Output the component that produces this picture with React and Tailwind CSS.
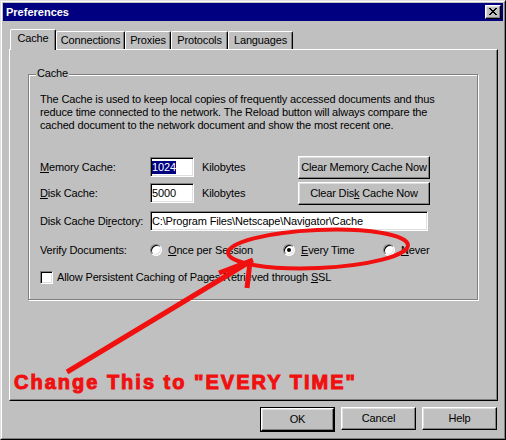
import React from "react";

const raised =
  "border border-t-white border-l-white border-r-black border-b-black shadow-[inset_-1px_-1px_#808080,inset_1px_1px_#dfdfdf] bg-[#c0c0c0]";
const sunken =
  "border border-t-[#808080] border-l-[#808080] border-r-white border-b-white shadow-[inset_1px_1px_#000,inset_-1px_-1px_#dfdfdf] bg-white";

function Button({ children, className = "" }) {
  return (
    <div className={`${raised} h-[23px] flex items-center justify-center ${className}`}>
      {children}
    </div>
  );
}

function Radio({ checked }) {
  return (
    <div className="w-[12px] h-[12px] rounded-full border border-t-[#808080] border-l-[#808080] border-r-white border-b-white shadow-[inset_1px_1px_#000,inset_-1px_-1px_#dfdfdf] bg-white flex items-center justify-center shrink-0">
      {checked && <div className="w-[4px] h-[4px] rounded-full bg-black" />}
    </div>
  );
}

function Tab({ children, w, selected }) {
  if (selected) {
    return (
      <div
        className={`${w} h-[21px] mb-[-1px] ml-px bg-[#c0c0c0] border-t border-l border-white border-r border-r-black shadow-[inset_-1px_0_#808080] rounded-t-[2px] flex items-start justify-center pt-[2px] relative z-10`}
      >
        {children}
      </div>
    );
  }
  return (
    <div
      className={`${w} h-[18px] bg-[#c0c0c0] border-t border-l border-white border-r border-r-black shadow-[inset_-1px_0_#808080] rounded-t-[2px] flex items-start justify-center pt-[2px]`}
    >
      {children}
    </div>
  );
}

export default function App() {
  return (
    <div className="relative w-[506px] h-[440px] bg-[#c0c0c0] font-['Liberation_Sans',Arial,sans-serif] text-[11px] leading-[13px] tracking-[-0.15px] text-black select-none overflow-hidden">
      <div className="w-full h-full border border-t-[#dfdfdf] border-l-[#dfdfdf] border-r-black border-b-black">
        <div className="w-full h-full border border-t-white border-l-white border-r-[#808080] border-b-[#808080] p-px flex flex-col">
          {/* Title bar */}
          <div className="h-[18px] bg-[#000080] flex items-center justify-between pl-[3px] pr-[2px] shrink-0">
            <span className="text-white font-bold text-[11px] tracking-normal">Preferences</span>
            <div className={`${raised} w-[16px] h-[14px] flex items-center justify-center pr-px pb-px`}>
              <svg width="8" height="7" viewBox="0 0 8 7" shapeRendering="crispEdges">
                <path
                  fill="#000"
                  d="M0 0h2v1H0z M6 0h2v1H6z M1 1h2v1H1z M5 1h2v1H5z M2 2h4v1H2z M3 3h2v1H3z M2 4h4v1H2z M1 5h2v1H1z M5 5h2v1H5z M0 6h2v1H0z M6 6h2v1H6z"
                />
              </svg>
            </div>
          </div>

          {/* Tabs */}
          <div className="mt-[8px] ml-[6px] h-[20px] flex items-end">
            <Tab w="w-[46px]" selected>
              Cache
            </Tab>
            <Tab w="w-[69px]">Connections</Tab>
            <Tab w="w-[46px]">Proxies</Tab>
            <Tab w="w-[57px]">Protocols</Tab>
            <Tab w="w-[65px]">Languages</Tab>
          </div>

          {/* Panel */}
          <div className="ml-[6px] w-[489px] h-[352px] border border-t-white border-l-white border-r-black border-b-black shadow-[inset_-1px_-1px_#808080] pt-[24px] pl-[18px]">
            <div className="relative w-[450px] h-[226px] border border-[#808080] shadow-[inset_1px_1px_#fff,1px_1px_#fff] pt-[18px] pl-[11px]">
              <div className="absolute top-[-8px] left-[7px] px-px bg-[#c0c0c0]">Cache</div>
              <div>
                The Cache is used to keep local copies of frequently accessed documents and thus
                <br />
                reduce time connected to the network. The Reload button will always compare the
                <br />
                cached document to the network document and show the most recent one.
              </div>

              <div className="mt-[22px] flex flex-col">
                <div className="h-[26px] flex items-center">
                  <div className="w-[110px]">
                    <u>M</u>emory Cache:
                  </div>
                  <div className={`${sunken} w-[44px] h-[20px] flex items-center pl-px`}>
                    <span className="bg-[#000080] text-white">1024</span>
                  </div>
                  <div className="ml-[8px] w-[96px]">Kilobytes</div>
                  <Button className="w-[132px]">
                    <span>
                      Clear Memor<u>y</u> Cache Now
                    </span>
                  </Button>
                </div>

                <div className="h-[26px] flex items-center">
                  <div className="w-[110px]">
                    <u>D</u>isk Cache:
                  </div>
                  <div className={`${sunken} w-[44px] h-[20px] flex items-center pl-px`}>
                    <span>5000</span>
                  </div>
                  <div className="ml-[8px] w-[96px]">Kilobytes</div>
                  <Button className="w-[132px]">
                    <span>
                      Clear Dis<u>k</u> Cache Now
                    </span>
                  </Button>
                </div>

                <div className="h-[30px] flex items-center">
                  <div className="w-[110px]">
                    Disk Cache Di<u>r</u>ectory:
                  </div>
                  <div className={`${sunken} w-[278px] h-[20px] flex items-center pl-px`}>
                    <span>C:\Program Files\Netscape\Navigator\Cache</span>
                  </div>
                </div>

                <div className="h-[28px] flex items-center">
                  <div className="w-[110px]">Verify Documents:</div>
                  <div className="w-[133px] flex items-center">
                    <Radio />
                    <span className="ml-[6px]">
                      <u>O</u>nce per Session
                    </span>
                  </div>
                  <div className="w-[100px] flex items-center">
                    <Radio checked />
                    <span className="ml-[6px]">
                      <u>E</u>very Time
                    </span>
                  </div>
                  <div className="flex items-center">
                    <Radio />
                    <span className="ml-[6px]">
                      <u>N</u>ever
                    </span>
                  </div>
                </div>

                <div className="h-[26px] flex items-center">
                  <div className={`${sunken} w-[13px] h-[13px]`} />
                  <span className="ml-[4px]">
                    Allow Persistent Caching of Pages Retrieved through <u>S</u>SL
                  </span>
                </div>
              </div>
            </div>
          </div>

          {/* Bottom buttons */}
          <div className="mt-[6px] flex justify-end gap-[6px] pr-[6px]">
            <div className="border border-black">
              <Button className="w-[73px] h-[21px]">OK</Button>
            </div>
            <Button className="w-[75px]">Cancel</Button>
            <Button className="w-[75px]">Help</Button>
          </div>
        </div>
      </div>

      {/* Annotation overlay */}
      <svg
        className="absolute inset-0 pointer-events-none"
        width="506"
        height="440"
        viewBox="0 0 506 440"
      >
        <ellipse
          cx="318"
          cy="249"
          rx="90"
          ry="19"
          transform="rotate(-2.5 318 249)"
          fill="none"
          stroke="#f01010"
          strokeWidth="4"
        />
        <path d="M67 372 L251 261" stroke="#f01010" strokeWidth="5" fill="none" />
        <path d="M253 260 L219 273" stroke="#f01010" strokeWidth="5" fill="none" />
        <path d="M250 262 L247 288" stroke="#f01010" strokeWidth="5" fill="none" />
      </svg>
      <div className="absolute left-[14px] top-[372px] text-[20px] leading-none font-bold tracking-[2px] text-[#f01010] whitespace-nowrap [-webkit-text-stroke:1px_#f01010]">
        Change This to "EVERY TIME"
      </div>
    </div>
  );
}
